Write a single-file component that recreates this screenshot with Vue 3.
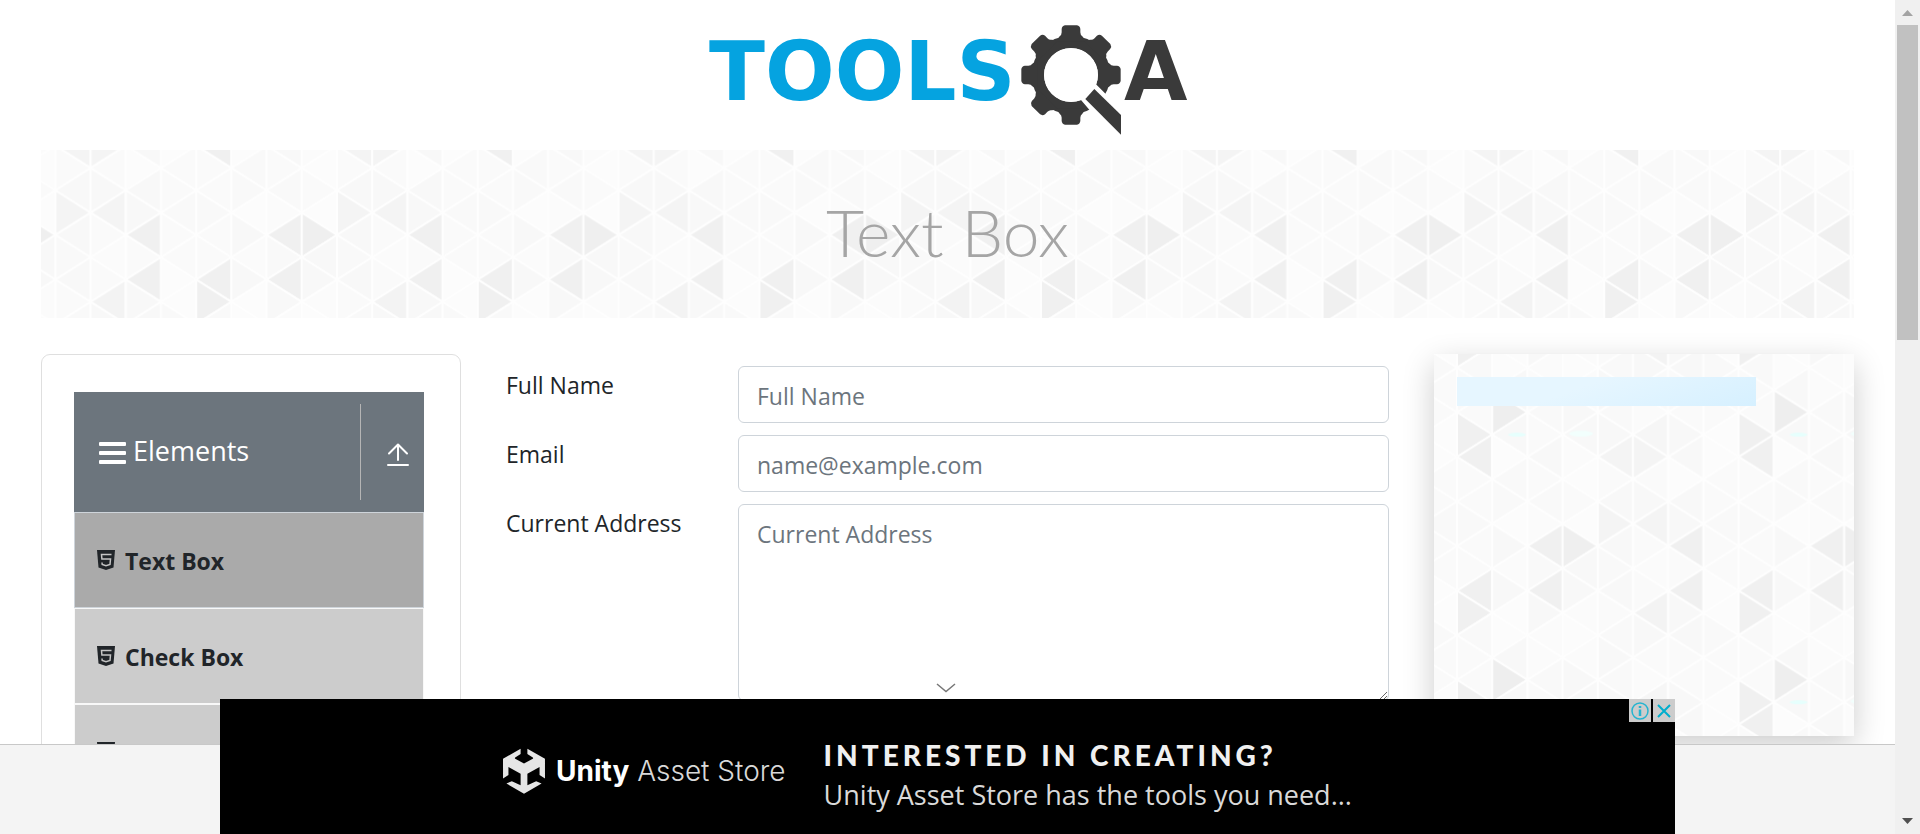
<script setup>
const COL = 35.2
const ROW = 22.3
const TILE_W = COL * 8
const TILE_H = ROW * 12

// Cells of the triangle tile that stand out, keyed by "column,row".
const accents = {
  '0,3': '#f0f0f0', '0,4': '#f0f0f0', '1,2': '#eeeeee', '4,4': '#f4f4f4',
  '5,4': '#f4f4f4', '5,3': '#f6f6f6', '4,7': '#f4f4f4', '5,7': '#f4f4f4',
  '2,8': '#f0f0f0', '3,8': '#efefef', '6,8': '#f0f0f0', '0,10': '#f0f0f0',
  '2,10': '#f0f0f0', '6,10': '#f0f0f0', '0,11': '#f0f0f0', '5,11': '#f3f3f3',
}
const soft = ['#f9f9f9', '#fbfbfb', '#f8f8f8', '#fafafa', '#f8f8f8', '#fafafa', '#fcfcfc']

const triangles = []
for (let c = 0; c < 8; c++) {
  for (let v = 0; v <= 12; v++) {
    const row = v % 12
    const left = (c + v) % 2 === 0
    const apex = left ? c * COL : (c + 1) * COL
    const base = left ? (c + 1) * COL : c * COL
    triangles.push({
      key: c + '-' + v,
      points: `${apex},${v * ROW} ${base},${(v - 1) * ROW} ${base},${(v + 1) * ROW}`,
      fill: accents[c + ',' + row] || soft[(c * c * 5 + row * row * 3 + c * row * 2 + c) % 7],
    })
  }
}

// Every 45 degrees except the corner where the handle starts.
const teeth = [0, 90, 135, 180, 225, 270, 315]
const items = [
  { label: 'Text Box', active: true },
  { label: 'Check Box', active: false },
  { label: 'Radio Button', active: false },
]
</script>

<template>
  <div class="shell">
    <div class="page">
      <header class="header">
        <a href="#" class="brand" aria-label="TOOLSQA">
          <svg width="525" height="130" viewBox="0 0 525 130">
            <text x="24" y="90" class="word" fill="#05a3e0">TOOLS</text>
            <g transform="translate(5 1) scale(0.33333)" fill="#3a3a3a">
              <circle cx="1143" cy="192" r="99" fill="none" stroke="#3a3a3a" stroke-width="37" />
              <path
                v-for="a in teeth"
                :key="a"
                :transform="`translate(1143 192) rotate(${a})`"
                d="M100 -46 L116 -34 Q120 -28 128 -28 H138 Q147 -27 149 -18 V18 Q147 27 138 28 H128 Q120 28 116 34 L100 46Z"
              />
              <path d="M1150 250 L1185 232 L1218 220 L1251 253 L1330 330 V400 L1198 296 L1173 267Z" fill="#fff" />
              <circle cx="1143" cy="192" r="81" fill="#fff" />
              <path d="M1213 234 L1293 312 V371 L1186 264Z" />
            </g>
            <text x="439" y="90" class="word" fill="#3a3a3a">A</text>
          </svg>
        </a>
      </header>

      <section class="banner">
        <svg class="pattern" width="100%" height="100%" aria-hidden="true">
          <defs>
            <pattern id="tile-banner" x="155.2" y="-93.4" :width="TILE_W" :height="TILE_H" patternUnits="userSpaceOnUse">
              <polygon v-for="t in triangles" :key="t.key" :points="t.points" :fill="t.fill" class="tri" />
            </pattern>
          </defs>
          <rect width="100%" height="100%" fill="url(#tile-banner)" />
        </svg>
        <h1>Text Box</h1>
      </section>

      <main class="columns">
        <nav class="side">
          <div class="group">
            <button type="button" class="group-head">
              <svg class="bars" width="27" height="23" viewBox="0 0 27 23" fill="#fff">
                <rect width="27" height="4" rx="1" />
                <rect y="9" width="27" height="4" rx="1" />
                <rect y="18" width="27" height="4" rx="1" />
              </svg>
              <span class="group-title">Elements</span>
              <span class="group-toggle">
                <svg width="22" height="24" viewBox="0 0 22 24" fill="none" stroke="#fff" stroke-width="2" stroke-linecap="round" stroke-linejoin="round">
                  <path d="M11 17V2M2 10.500L11 1.500L20 10.500M1 22H21" />
                </svg>
              </span>
            </button>
            <ul class="menu">
              <li v-for="item in items" :key="item.label" :class="{ active: item.active }">
                <a href="#">
                  <svg width="18" height="20" viewBox="0 0 18 20">
                    <path d="M0 0H18L16.500 17.500L9 20L1.500 17.500Z" fill="#212529" />
                    <path d="M14.500 4.500H4.500L4.900 9H13.500L13 14.500L9 15.800L5.200 14.500L5 12.500" fill="none" stroke="#c4c4c4" stroke-width="1.500" />
                  </svg>
                  <span>{{ item.label }}</span>
                </a>
              </li>
            </ul>
          </div>
        </nav>

        <form class="form" @submit.prevent>
          <label for="name">Full Name</label>
          <input id="name" type="text" placeholder="Full Name" />
          <label for="email">Email</label>
          <input id="email" type="email" placeholder="name@example.com" />
          <label for="address">Current Address</label>
          <textarea id="address" rows="5" placeholder="Current Address"></textarea>
        </form>

        <aside class="promo">
          <svg class="pattern" width="100%" height="100%" aria-hidden="true">
            <defs>
              <pattern id="tile-promo" x="23" y="13.7" :width="TILE_W" :height="TILE_H" patternUnits="userSpaceOnUse">
                <polygon v-for="t in triangles" :key="t.key" :points="t.points" :fill="t.fill" class="tri" />
                <ellipse cx="60" cy="67" rx="9" ry="2" fill="#e6fffd" />
                <ellipse cx="124" cy="66" rx="12" ry="3" fill="#f2fffd" />
              </pattern>
            </defs>
            <rect width="100%" height="100%" fill="url(#tile-promo)" />
          </svg>
          <div class="promo-bar"></div>
        </aside>
      </main>

      <footer class="footer"></footer>

      <section class="ad">
        <button type="button" class="collapse" aria-label="Collapse">
          <svg width="20" height="10" viewBox="0 0 20 10" fill="none" stroke="#777" stroke-width="1.500">
            <path d="M1 1L10 8.500L19 1" />
          </svg>
        </button>
        <a href="#" class="ad-body">
          <span class="ad-brand">
            <svg width="42" height="46" viewBox="0 0 124 136" fill="#e6e6e6">
              <path d="M52 2V18L36 28Q34 30 36 32L62 46L88 32Q90 30 88 28L72 18V2L124 32V90L108 80V56L72 76V110L98 98L114 105L62 135L10 105L26 98L52 110V76L16 56V80L0 90V32Z" />
            </svg>
            <span class="ad-name"><b>Unity</b> Asset Store</span>
          </span>
          <span class="ad-copy">
            <strong>INTERESTED IN CREATING?</strong>
            <span>Unity Asset Store has the tools you need...</span>
          </span>
        </a>
        <div class="ad-tools">
          <button type="button" aria-label="Ad information">
            <svg width="18" height="18" viewBox="0 0 18 18" fill="none" stroke="#24b4d0" stroke-width="1.500">
              <circle cx="9" cy="9" r="8" />
              <path d="M9 7.500V14M9 4V6" stroke-width="2.500" />
            </svg>
          </button>
          <button type="button" aria-label="Close ad">
            <svg width="14" height="14" viewBox="0 0 14 14" fill="none" stroke="#00aecd" stroke-width="2">
              <path d="M1 1L13 13M13 1L1 13" />
            </svg>
          </button>
        </div>
      </section>
    </div>

    <div class="scrollbar" aria-hidden="true">
      <svg width="11" height="6" viewBox="0 0 11 6"><path d="M0 6L5.500 0L11 6Z" fill="#a3a3a3" /></svg>
      <div class="thumb"></div>
      <svg width="11" height="6" viewBox="0 0 11 6"><path d="M0 0L5.500 6L11 0Z" fill="#505050" /></svg>
    </div>
  </div>
</template>

<style>
body {
  overflow: hidden;
}
</style>

<style scoped>
.shell,
.shell * {
  box-sizing: border-box;
}
.shell {
  display: flex;
  height: 100vh;
  font-family: "Open Sans", "Noto Sans", sans-serif;
  font-size: 23px;
  line-height: 38px;
  color: #212529;
  background: #fff;
}
.page {
  position: relative;
  flex: 1;
  min-width: 0;
  overflow: hidden;
}
button {
  padding: 0;
  border: 0;
  background: none;
  font: inherit;
  color: inherit;
}
.header {
  display: flex;
  justify-content: center;
  padding: 10px 0;
}
.brand,
.brand svg {
  display: block;
}
.word {
  font-family: "DejaVu Sans", sans-serif;
  font-size: 82px;
  font-weight: 700;
}
.banner {
  position: relative;
  display: flex;
  align-items: center;
  justify-content: center;
  height: 168px;
  margin: 0 41px 36px;
}
.pattern {
  position: absolute;
  inset: 0;
}
.tri {
  stroke: #fefefe;
  stroke-width: 2;
  stroke-linejoin: round;
}
h1 {
  position: relative;
  margin: 0;
  padding-bottom: 4px;
  font-family: Lato, "Open Sans", sans-serif;
  font-size: 66px;
  line-height: 84px;
  font-weight: 300;
  color: #a5a5a5;
}
.columns {
  display: grid;
  grid-template-columns: 420px 1fr 420px;
  align-items: start;
  gap: 45px;
  padding: 0 41px;
}
.side {
  padding: 37px 36px 37px 32px;
  border: 1px solid #dfdfdf;
  border-radius: 9px;
}
.group-head {
  display: flex;
  align-items: center;
  width: 100%;
  height: 120px;
  padding-left: 25px;
  background: #6c757d;
  color: #fff;
}
.bars {
  margin-top: 3px;
}
.group-title {
  flex: 1;
  padding: 0 0 2px 7px;
  font-size: 27px;
  text-align: left;
}
.group-toggle {
  display: flex;
  align-items: center;
  justify-content: center;
  width: 64px;
  height: 96px;
  padding: 6px 14px 0 24px;
  border-left: 1px solid #b5b5b5;
}
.menu {
  margin: 0;
  padding: 0;
  list-style: none;
}
.menu li {
  height: 96px;
  border: 1px solid #f8f8f8;
  background: #ccc;
}
.menu li.active {
  border-color: #ced4da;
  background: #aaa;
}
.menu a {
  display: flex;
  align-items: center;
  gap: 10px;
  height: 100%;
  padding: 2px 0 0 22px;
  font-weight: 700;
  color: #212529;
  text-decoration: none;
}
.menu svg {
  margin-bottom: 2px;
}
.form {
  display: grid;
  grid-template-columns: 232px 1fr;
  gap: 12px 0;
  padding-top: 12px;
}
.form input,
.form textarea {
  display: block;
  width: 100%;
  height: 57px;
  margin: 0;
  padding: 10px 18px 8px;
  border: 1px solid #ced4da;
  border-radius: 6px;
  background: #fff;
  font: inherit;
  color: #495057;
}
.form textarea {
  height: 197px;
}
.form ::placeholder {
  color: #6c757d;
  opacity: 1;
}
.promo {
  position: relative;
  height: 382px;
  padding: 23px;
  box-shadow: 0 10px 30px rgba(0, 0, 0, 0.2);
}
.promo-bar {
  position: relative;
  width: 80%;
  height: 29px;
  background: linear-gradient(160deg, #e6f6ff 40%, #d6f0ff);
}
.footer {
  position: absolute;
  inset: auto 0 0;
  height: 90px;
  border-top: 1px solid #c8c8c8;
  background: #f4f4f4;
}
.ad {
  position: absolute;
  inset: auto 0 0;
  width: 1455px;
  max-width: 100%;
  height: 135px;
  margin: 0 auto;
  background: #000;
}
.collapse {
  position: absolute;
  left: 50%;
  bottom: 100%;
  width: 20px;
  height: 16px;
  margin-left: -12px;
}
.collapse svg {
  display: block;
  margin-bottom: 6px;
}
.ad-body {
  display: flex;
  align-items: center;
  gap: 38px;
  height: 100%;
  padding-left: 283px;
  padding-top: 8px;
  color: #d9d9d9;
  text-decoration: none;
}
.ad-brand {
  display: flex;
  align-items: center;
  gap: 11px;
}
.ad-name {
  font-family: Inter, sans-serif;
  font-size: 28px;
  font-weight: 300;
  white-space: nowrap;
}
.ad-name b {
  font-weight: 700;
  color: #fff;
}
.ad-copy {
  display: flex;
  flex-direction: column;
  padding-top: 8px;
  white-space: nowrap;
  font-size: 27px;
  line-height: 40px;
}
.ad-copy strong {
  font-family: Lato, sans-serif;
  font-size: 28px;
  font-weight: 900;
  letter-spacing: 4px;
  color: #f0f0f0;
}
.ad-tools {
  position: absolute;
  top: 0;
  right: 0;
  display: flex;
  gap: 2px;
}
.ad-tools button {
  display: flex;
  align-items: center;
  justify-content: center;
  width: 22px;
  height: 23px;
  background: #ccc;
}
.scrollbar {
  display: flex;
  flex-direction: column;
  align-items: center;
  width: 25px;
  padding: 10px 0;
  background: #f0f0f0;
}
.thumb {
  width: 21px;
  height: 315px;
  margin: 9px 0 auto;
  background: #c1c1c1;
}
</style>
